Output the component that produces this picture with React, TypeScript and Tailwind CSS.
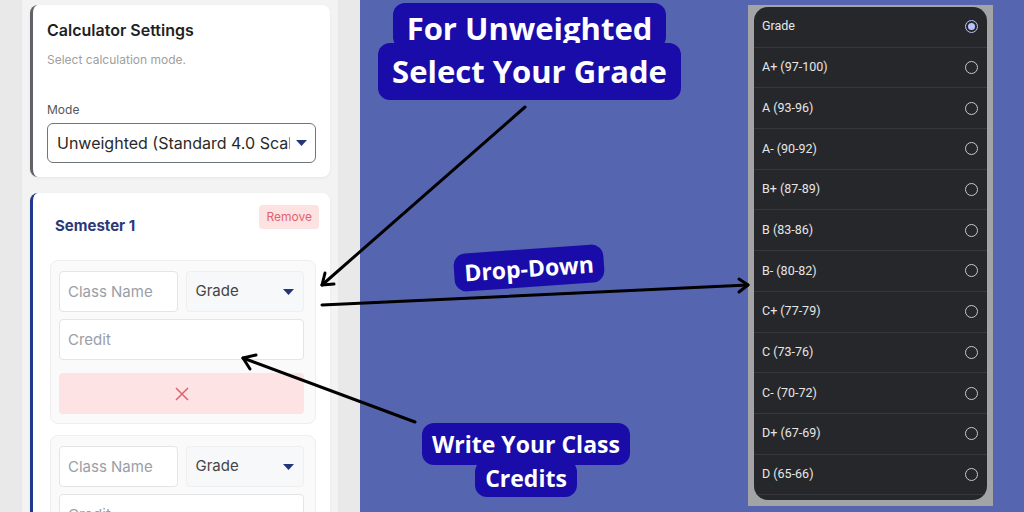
import React from "react";

const grades = [
  "Grade",
  "A+ (97-100)",
  "A (93-96)",
  "A- (90-92)",
  "B+ (87-89)",
  "B (83-86)",
  "B- (80-82)",
  "C+ (77-79)",
  "C (73-76)",
  "C- (70-72)",
  "D+ (67-69)",
  "D (65-66)",
];

const Caret = () => (
  <svg width="11" height="6" viewBox="0 0 11 6" className="shrink-0">
    <polygon points="0,0 11,0 5.5,6" fill="#26357a" />
  </svg>
);

const ClassBlock = ({ withRemove }: { withRemove: boolean }) => (
  <div className="rounded-lg border border-[#eeeeee] bg-[#fafafa] pt-[10px] pb-[9px] pl-2 pr-[11px]">
    <div className="grid grid-cols-2 gap-2">
      <input
        placeholder="Class Name"
        className="h-[41px] w-full rounded border border-[#e5e5e5] bg-white pl-2 text-[15px] text-[#333] placeholder:text-[#9a9ea6] outline-none"
      />
      <div className="flex h-[41px] items-center justify-between rounded border border-[#efefef] bg-[#f7f8f9] pl-[9px] pr-[9px] text-[15px] text-[#444]">
        Grade
        <Caret />
      </div>
    </div>
    <input
      placeholder="Credit"
      className="mt-[7px] h-[41px] w-full rounded border border-[#e5e5e5] bg-white pl-2 text-[15px] text-[#333] placeholder:text-[#9a9ea6] outline-none"
    />
    {withRemove && (
      <div className="mt-[13px] flex h-[41px] items-center justify-center rounded bg-[#fde3e3]">
        <svg width="16" height="16" viewBox="0 0 16 16">
          <path d="M2 2 L14 14 M14 2 L2 14" stroke="#e0606d" strokeWidth="1.5" />
        </svg>
      </div>
    )}
  </div>
);

const Label = ({ children, className }: { children: React.ReactNode; className: string }) => (
  <div
    className={`flex items-center justify-center whitespace-nowrap rounded-xl bg-[#1a0ca8] font-bold text-white ${className}`}
    style={{ fontFamily: '"Open Sans", sans-serif' }}
  >
    {children}
  </div>
);

export default function App() {
  return (
    <div className="relative flex h-[512px] w-[1024px] overflow-hidden" style={{ fontFamily: "Inter, sans-serif" }}>
      {/* Left: calculator form */}
      <div className="flex w-[360px] shrink-0 bg-[#e9e9e9]">
        <div className="ml-[22px] flex w-[316px] flex-col gap-4 bg-[#f3f3f4] px-2 pt-[5px]">
          <div className="h-[172px] shrink-0 rounded-lg border-l-[3px] border-[#5f6368] bg-white pt-[15px] pl-[14px] pr-[11px] shadow-[0_1px_3px_rgba(0,0,0,0.06)]">
            <h2 className="text-[16px] font-semibold leading-5 text-[#1f1f1f]">Calculator Settings</h2>
            <p className="mt-3 text-[12px] leading-4 text-[#a0a0a0]">Select calculation mode.</p>
            <p className="mt-[34px] text-[12px] leading-4 text-[#555]">Mode</p>
            <div className="mt-[5px] flex h-10 w-[269px] items-center justify-between rounded-md border border-[#70757a] pl-[9px] pr-[8px]">
              <span className="w-[233px] overflow-hidden whitespace-nowrap text-[16px] text-[#2a2a2a]">
                Unweighted (Standard 4.0 Scale)
              </span>
              <Caret />
            </div>
          </div>

          <div className="flex-1 rounded-t-lg border-l-[3px] border-[#22388a] bg-white pt-3 pl-[17px] pr-[11px] shadow-[0_1px_3px_rgba(0,0,0,0.06)]">
            <div className="flex items-start justify-between">
              <h3 className="mt-[11px] ml-[5px] text-[15px] font-bold leading-5 text-[#2c3878]">Semester 1</h3>
              <button className="h-6 rounded bg-[#fde2e2] px-[7px] text-[12px] text-[#e2636d]">Remove</button>
            </div>
            <div className="mt-6 mr-[3px] flex flex-col gap-[11px]">
              <ClassBlock withRemove />
              <ClassBlock withRemove={false} />
            </div>
          </div>
        </div>
      </div>

      {/* Right: annotation canvas */}
      <div className="relative flex flex-1 justify-end bg-[#5565b0] pt-[5px] pr-[31px] pb-[6px]">
        <div className="flex h-[501px] w-[245px] bg-[#a2a4a6] pt-[2px] pr-[6px] pb-[6px] pl-[6px]">
          <div
            className="flex-1 overflow-hidden rounded-[14px] bg-[#26272b]"
            style={{ fontFamily: "Roboto, sans-serif" }}
          >
            {grades.map((g, i) => (
              <div key={g} className="flex h-[40.7px] items-center justify-between border-b border-[#37383c] pl-2 pr-[9px]">
                <span className="text-[12.5px] text-[#e6e6e6]">{g}</span>
                {i === 0 ? (
                  <span className="flex h-[13px] w-[13px] items-center justify-center rounded-full border-[1.5px] border-[#b9c2ff]">
                    <span className="h-[7px] w-[7px] rounded-full bg-[#b9c2ff]" />
                  </span>
                ) : (
                  <span className="h-[13px] w-[13px] rounded-full border-[1.5px] border-[#c9c9c9]" />
                )}
              </div>
            ))}
          </div>
        </div>

        <div className="absolute top-[3px] left-[18px] flex w-[303px] flex-col items-center">
          <Label className="h-[46px] px-[14px] pt-1 text-[31px]">For Unweighted</Label>
          <Label className="-mt-[6px] h-[57px] px-[14px] text-[31px]">Select Your Grade</Label>
        </div>

        <Label className="absolute top-[249px] left-[94px] h-[38px] w-[150px] -rotate-[4deg] text-[23px]">Drop-Down</Label>

        <div className="absolute top-[423px] left-[63px] flex w-[206px] flex-col items-center">
          <Label className="h-[42px] px-[10px] text-[23px]">Write Your Class</Label>
          <Label className="-mt-[5px] h-[37px] px-[10px] text-[23px]">Credits</Label>
        </div>
      </div>

      {/* Arrows */}
      <svg className="pointer-events-none absolute inset-0" width="1024" height="512" viewBox="0 0 1024 512">
        <g stroke="#000" strokeWidth="3" fill="none" strokeLinecap="round" strokeLinejoin="round">
          <path d="M525 107 L322 285" />
          <path d="M334 284 L322 285 L325 273" />
          <path d="M322 305 L748 285" />
          <path d="M739 279 L748 285 L739 292" />
          <path d="M415 422 L243 358" />
          <path d="M250 369 L243 358 L256 355" />
        </g>
      </svg>
    </div>
  );
}
